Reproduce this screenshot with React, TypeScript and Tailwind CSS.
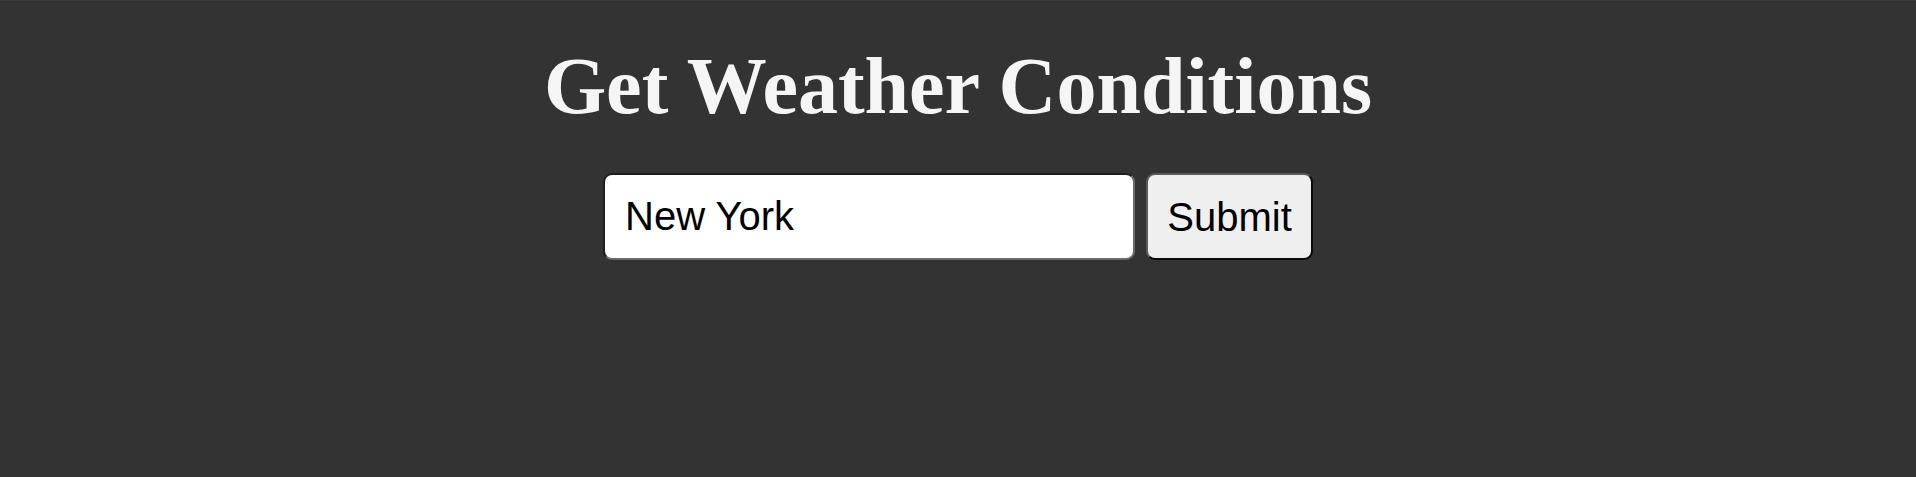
import React from "react";

export default function App() {
  return (
    <div className="min-h-[477px] w-full bg-[#333333] border-t border-t-[#3d3d3d] flex flex-col items-center">
      <h1 className="mt-[39px] text-[80px] leading-[92px] font-bold text-[#f5f5f5] [font-family:'Liberation_Serif','Times_New_Roman',serif]">
        Get Weather Conditions
      </h1>
      <form
        className="mt-[41px] flex items-stretch gap-[11px]"
        onSubmit={(e) => e.preventDefault()}
      >
        <input
          type="text"
          defaultValue="New York"
          className="w-[532px] h-[87px] rounded-[9px] bg-white border-2 border-t-[#1e1e1e] border-l-[#1e1e1e] border-b-[#6b6b6b] border-r-[#6b6b6b] px-[20px] text-[40px] text-black outline-none [font-family:'Liberation_Sans',Arial,sans-serif]"
        />
        <button
          type="submit"
          className="h-[87px] w-[167px] rounded-[9px] bg-[#efefef] border-2 border-t-[#5a5a5a] border-l-[#5a5a5a] border-b-[#0a0a0a] border-r-[#0a0a0a] text-[40px] text-black [font-family:'Liberation_Sans',Arial,sans-serif]"
        >
          Submit
        </button>
      </form>
    </div>
  );
}
